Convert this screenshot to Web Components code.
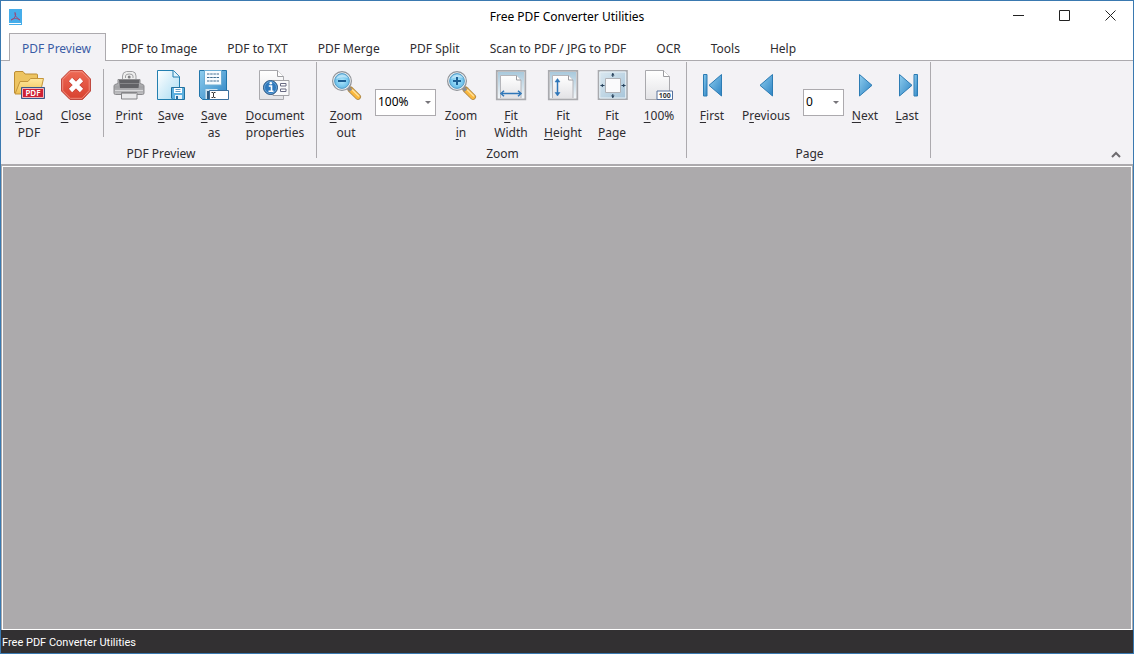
<!DOCTYPE html>
<html lang="en">
<head>
<meta charset="utf-8">
<title>Free PDF Converter Utilities</title>
<style>
html, body { height: 100%; margin: 0; }
body { font: 12px/17px "Noto Sans", "Open Sans", sans-serif; color: #2e2c30; }
</style>
</head>
<body>
<app-window>
  <title-bar slot="title">Free PDF Converter Utilities</title-bar>
  <tab-strip slot="tabs">
    <ribbon-tab selected>PDF Preview</ribbon-tab>
    <ribbon-tab>PDF to Image</ribbon-tab>
    <ribbon-tab>PDF to TXT</ribbon-tab>
    <ribbon-tab>PDF Merge</ribbon-tab>
    <ribbon-tab>PDF Split</ribbon-tab>
    <ribbon-tab>Scan to PDF / JPG to PDF</ribbon-tab>
    <ribbon-tab>OCR</ribbon-tab>
    <ribbon-tab>Tools</ribbon-tab>
    <ribbon-tab>Help</ribbon-tab>
  </tab-strip>
  <ribbon-bar slot="ribbon">
    <ribbon-group label="PDF Preview">
      <ribbon-button icon="load"><u>L</u>oad<br>PDF</ribbon-button>
      <ribbon-button icon="close" width="52"><u>C</u>lose</ribbon-button>
      <ribbon-divider></ribbon-divider>
      <ribbon-button icon="print"><u>P</u>rint</ribbon-button>
      <ribbon-button icon="save"><u>S</u>ave</ribbon-button>
      <ribbon-button icon="saveas" width="44"><u>S</u>ave<br>as</ribbon-button>
      <ribbon-button icon="props" width="78"><u>D</u>ocument<br>properties</ribbon-button>
    </ribbon-group>
    <ribbon-group label="Zoom">
      <ribbon-button icon="zoomout" width="50"><u>Z</u>oom<br>out</ribbon-button>
      <ribbon-combo label="Zoom level" value="100%" wide></ribbon-combo>
      <ribbon-button icon="zoomin" width="50">Zoom<br><u>i</u>n</ribbon-button>
      <ribbon-button icon="fitwidth" width="50"><u>F</u>it<br>Width</ribbon-button>
      <ribbon-button icon="fitheight" width="54">Fit<br><u>H</u>eight</ribbon-button>
      <ribbon-button icon="fitpage" width="44">Fit<br><u>P</u>age</ribbon-button>
      <ribbon-button icon="actual" width="50"><u>1</u>00%</ribbon-button>
    </ribbon-group>
    <ribbon-group label="Page">
      <ribbon-button icon="first"><u>F</u>irst</ribbon-button>
      <ribbon-button icon="previous" width="66">P<u>r</u>evious</ribbon-button>
      <ribbon-combo label="Page number" value="0"></ribbon-combo>
      <ribbon-button icon="next"><u>N</u>ext</ribbon-button>
      <ribbon-button icon="last"><u>L</u>ast</ribbon-button>
    </ribbon-group>
  </ribbon-bar>
  <status-bar slot="status">Free PDF Converter Utilities</status-bar>
</app-window>

<script>
const define = (name, html, setup) => {
  const template = document.createElement('template');
  template.innerHTML = html;
  customElements.define(name, class extends HTMLElement {
    connectedCallback() {
      if (this.shadowRoot) return;
      this.attachShadow({ mode: 'open' }).append(template.content.cloneNode(true));
      if (setup) setup(this, this.shadowRoot);
    }
  });
};

const GRADIENTS = `<defs>
  <linearGradient id="page" x1="0" y1="0" x2="0" y2="1"><stop offset="0" stop-color="#fff"/><stop offset="1" stop-color="#e3e3e6"/></linearGradient>
  <linearGradient id="blue" x1="0" y1="0" x2="1" y2="1"><stop offset="0" stop-color="#8fcdee"/><stop offset="1" stop-color="#2d84c4"/></linearGradient>
  <linearGradient id="sheet" x1="0" y1="0" x2="1" y2="1"><stop offset="0" stop-color="#fff"/><stop offset="1" stop-color="#a9dcf3"/></linearGradient>
  <linearGradient id="sky" x1="0" y1="0" x2="1" y2="1"><stop offset="0" stop-color="#dce9f1"/><stop offset="1" stop-color="#a5c4d9"/></linearGradient>
  <linearGradient id="skytop" x1="0" y1="0" x2="0" y2="1"><stop offset="0" stop-color="#a9c9dc"/><stop offset="1" stop-color="#f2f6f9"/></linearGradient>
  <linearGradient id="gold" x1="0" y1="0" x2="0" y2="1"><stop offset="0" stop-color="#ffe9a0"/><stop offset="1" stop-color="#efc052"/></linearGradient>
  <linearGradient id="red" x1="0" y1="0" x2="0" y2="1"><stop offset="0" stop-color="#ee6a56"/><stop offset="1" stop-color="#d8412f"/></linearGradient>
  <linearGradient id="metal" x1="0" y1="0" x2="0" y2="1"><stop offset="0" stop-color="#c9c9cb"/><stop offset=".5" stop-color="#a2a2a5"/><stop offset="1" stop-color="#c0c0c2"/></linearGradient>
  <radialGradient id="lens"><stop offset="0" stop-color="#b4e8fc"/><stop offset="1" stop-color="#63bce9"/></radialGradient>
</defs>`;

const lens = sign => `
  <path d="M20.500 20.500 28 27.800" stroke="#b08a4a" stroke-width="6" stroke-linecap="round"/>
  <path d="M21.500 21.500 28 27.800" stroke="#fbb83c" stroke-width="4.400" stroke-linecap="round"/>
  <path d="M22.500 21 28.500 27" stroke="#ffe09a" stroke-width="1.400" stroke-linecap="round"/>
  <path d="m18 18.500 3 3" stroke="#8b8d92" stroke-width="3.400"/>
  <circle cx="12" cy="12" r="9.400" fill="#eef3f6" stroke="#909398" stroke-width="1.200"/>
  <circle cx="12" cy="12" r="7.400" fill="url(#lens)" stroke="#5a9dc6"/>
  <path d="M6 10a6.500 6.500 0 0 1 12-1Q12 7 6 10Z" fill="#fff" opacity=".45"/>
  <path d="${sign}" stroke="#1c5f94" stroke-width="2"/>`;

const frame = `
  <path d="M1.800 1.800h28.500v28.500H1.800Z" fill="#fff" stroke="#a9aaae" stroke-width="1.800"/>
  <path d="M3 3h26v26H3Z" fill="url(#skytop)"/>
  <path d="M5.500 29V6.500h16l4.500 4.500v18" fill="url(#page)" stroke="#b4b5ba"/>
  <path d="M21.500 6.500V11H26" fill="#fff" stroke="#9a9ba0"/>`;

const ICONS = {
  load: `<path d="M1.500 24V4q0-1.500 1.500-1.500h7l2 2.500h11.500q1 0 1 1V24Z" fill="#edc461" stroke="#bd8e34"/>
    <path d="m2 25 5-12.500h8l2.500-3h13L27 25Z" fill="url(#gold)" stroke="#c4953a"/>
    <path d="M8.500 18.500h23v11h-23Z" fill="#cf2034" stroke="#385a8b"/>
    <path d="M9.500 19.500h21v9h-21Z" fill="none" stroke="#f3dfe3" stroke-width=".8"/>
    <text x="20" y="27" font-size="8" font-weight="600" fill="#fff" text-anchor="middle">PDF</text>`,
  close: `<path d="M10 1.500h12.500l8 8.500v12l-8 8.500H10L1.500 22V10Z" fill="url(#red)" stroke="#c04a40"/>
    <path d="M10.500 2.700h11.500l7.200 7.800v11l-7.200 7.800H10.500L2.700 21.500v-11Z" fill="none" stroke="#f39a8c" stroke-width=".8"/>
    <path d="m10.500 10.500 11 11m0-11-11 11" stroke="#c03c30" stroke-width="6"/>
    <path d="m10.500 10.500 11 11m0-11-11 11" stroke="#fff" stroke-width="4.600"/>`,
  print: `<path d="M9.500 12V7q0-4 4-4.500h6q3.500.5 3.500 4.500v5Z" fill="#eee" stroke="#a0a0a3"/>
    <path d="M12.500 9V7q0-2 3.800-2T20 7v2" fill="none" stroke="#a0a0a3"/><circle cx="16.200" cy="8" r="1.500" fill="#818184"/>
    <path d="M5 10.500h22v4l3 1q1 .5 1 1.500v7q0 1.500-1.500 1.500H2.500Q1 25.500 1 24v-7q0-1 1-1.500l3-1Z" fill="url(#metal)" stroke="#8b8b8e"/>
    <path d="M6 11h20.500l-1 8h-18.500Z" fill="#626266"/><path d="M6.500 14.500h19.500" stroke="#87878a"/>
    <path d="M2 21.500h28" stroke="#d9d9db"/>
    <path d="M8.500 23.500h15.500v6.500H8.500Z" fill="#e9e9eb" stroke="#858588"/><path d="M9 24.500h14.500" stroke="#aaaaac"/>`,
  save: `<path d="M2.500 1.500h16l6 6v23h-22Z" fill="url(#sheet)" stroke="#237fb0"/>
    <path d="M18 1.500V8h6.500" fill="#e1f4fc" stroke="#237fb0"/>
    <path d="M16.500 18.500h13v12H18l-1.500-1.500Z" fill="#5db0df" stroke="#22719f"/>
    <path d="M19 19h8v5h-8Z" fill="#fff"/><path d="M20.500 20.500h5m-5 2h5" stroke="#3d86b7" stroke-width=".8"/>
    <path d="M20 26h7v4h-7Z" fill="#e8f2f8"/><path d="M21 27h2v3h-2Z" fill="#286c9c"/>`,
  saveas: `<path d="M1.500 1.500h27v29H4.500l-3-3Z" fill="url(#blue)" stroke="#2176ab"/>
    <path d="M6.500 1.500h17V16h-17Z" fill="#f7fbfe" stroke="#6daed4"/>
    <path d="M9 5h12M9 8.500h12M9 12h12" stroke="#3e6b90" stroke-dasharray="2.500 .7"/>
    <path d="M7.500 20h12v10h-12Z" fill="#d2e4ee"/><path d="M9 22h4v8H9Z" fill="#315c80"/>
    <path d="M11.500 21.500h19v9h-19Z" fill="#fff" stroke="#396e9c"/>
    <path d="M13.500 23.500h1.500l.5.5.5-.5h1.500m-4 5h1.500l.5-.5.5.5h1.500m-2-4.500v4" stroke="#222" fill="none" stroke-width=".9"/>`,
  props: `<path d="M.5 1.500h18l6 6v23H.5Z" fill="url(#page)" stroke="#aaaaae"/>
    <path d="M18.500 1.500v6h6" fill="#fff" stroke="#9d9da1"/>
    <path d="M14 11.500h16v15H14Z" fill="#f9f9fa" stroke="#a2a2a6"/>
    <path d="M21.500 14.500h5.500V17h-5.500Zm0 5.500h5.500v2.500h-5.500Z" fill="#fff" stroke="#686a81"/>
    <circle cx="11.500" cy="18.500" r="7" fill="#2f79bd" stroke="#28537f"/><circle cx="11.500" cy="18.500" r="6" fill="none" stroke="#80b6df" stroke-width=".7"/>
    <path d="M9.800 17h2.700v5m-3 .3h5" stroke="#fff" stroke-width="1.600" fill="none"/><circle cx="11.800" cy="14.200" r="1.300" fill="#fff"/>`,
  zoomout: lens('M8 12h8'),
  zoomin: lens('M8 12h8m-4-4v8'),
  fitwidth: `${frame}<path d="M7 24.500h18" stroke="#2e76b8" stroke-width="1.500"/><path d="m9 21.800-3 2.700 3 2.700m14-5.400 3 2.700-3 2.700" fill="none" stroke="#2e76b8" stroke-width="1.500"/>`,
  fitheight: `${frame}<path d="M10.500 11v14" stroke="#2e76b8" stroke-width="1.500"/><path d="m8 13 2.500-3.500L13 13Zm0 10.500 2.500 3.500 2.500-3.500Z" fill="#2e76b8" stroke="#2e76b8" stroke-width=".5"/>`,
  fitpage: `<path d="M2.500 1.800H31v28.400H2.500Z" fill="url(#sky)" stroke="#a9aaae" stroke-width="1.600"/><path d="M3.800 3h25.900v26H3.800Z" fill="none" stroke="#e9f1f6"/>
    <path d="M9.500 9.500h15v14h-15Z" fill="#fafafc" stroke="#b0b2b7"/>
    <path d="M16.800 4v4m0 17v4M4.500 16.500h4m17 0h4" stroke="#29435d"/>
    <path d="m15 6.500 1.800-2.500 1.800 2.500Zm0 20 1.800 2.500 1.800-2.500ZM7 14.700l-2.500 1.800L7 18.300Zm20 0 2.500 1.800-2.500 1.800Z" fill="#29435d"/>`,
  actual: `<path d="M2.500 1.500h18l6 6v23h-24Z" fill="url(#page)" stroke="#a9a9ad"/><path d="M20.500 1.500v6h6" fill="#fff" stroke="#9a9a9e"/>
    <path d="M14 22h15.500v8.500H14Z" fill="#fff" stroke="#56709b"/>
    <text x="21.800" y="28.800" font-size="7" font-weight="700" fill="#35353a" text-anchor="middle">100</text>`,
  first: `<path d="M7.500 5.500h3.500v21.500H7.500Z" fill="url(#blue)" stroke="#2c7cb4"/><path d="M25.500 5.500v21.500L13 16.300Z" fill="url(#blue)" stroke="#2c7cb4"/>`,
  previous: `<path d="M22.500 5.500v21.500L10 16.300Z" fill="url(#blue)" stroke="#2c7cb4"/>`,
  next: `<path d="M10.500 5.500v21.500L23 16.300Z" fill="url(#blue)" stroke="#2c7cb4"/>`,
  last: `<path d="M8.500 5.500v21.500L21 16.300Z" fill="url(#blue)" stroke="#2c7cb4"/><path d="M23 5.500h3.500v21.500H23Z" fill="url(#blue)" stroke="#2c7cb4"/>`
};

define('app-window', `<style>
  :host { display: flex; flex-direction: column; box-sizing: border-box; min-height: 100vh; border: 1px solid #3a79b0; background: #fff; }
  .work { flex: 1; display: flex; background: #acaaac; }
  main { flex: 1; margin: 1px 1px 0; border: 1px solid #fff; }
</style>
<slot name="title"></slot><slot name="tabs"></slot><slot name="ribbon"></slot>
<div class="work"><main aria-label="Document"></main></div>
<slot name="status"></slot>`);

define('title-bar', `<style>
  :host { display: grid; grid-template-columns: 1fr auto 1fr; align-items: start; height: 32px; color: #000; }
  .logo { width: 13px; height: 16px; margin: 8px 0 0 8px; }
  h1 { margin: 7px 0 0; font: inherit; }
  .controls { display: flex; justify-content: end; }
  button { width: 46px; height: 29px; padding: 0; border: 0; background: none; }
  button svg { display: block; margin: auto; }
</style>
<svg class="logo" viewBox="0 0 13 16"><path d="M0 0h13v16H0Z" fill="#45adea"/><path d="M0 14h12v1H0Z" fill="#fff"/><path d="M6 3.500c2 3-1 6.500-4 7.500 3-2 6-2 9 0C8 9 5.500 7 6 3.500Z" fill="none" stroke="#9d4a78"/></svg>
<h1><slot></slot></h1>
<div class="controls">
  <button aria-label="Minimize"><svg width="11" height="11" fill="none" stroke="#222"><path d="M0 5.500h11"/></svg></button>
  <button aria-label="Maximize"><svg width="11" height="11" fill="none" stroke="#222"><path d="M.5.5h10v10H.5Z"/></svg></button>
  <button aria-label="Close"><svg width="11" height="11" fill="none" stroke="#222"><path d="m.5.5 10 10m0-10-10 10"/></svg></button>
</div>`);

define('tab-strip', `<style>
  :host { display: flex; gap: 2px; height: 28px; padding-left: 8px; background: linear-gradient(#acaaae, #acaaae) bottom / 100% 1px no-repeat; }
</style><slot></slot>`, h => h.setAttribute('role', 'tablist'));

define('ribbon-tab', `<style>
  :host { display: flex; }
  button { padding: 2px 14px 0 12px; border: 1px solid transparent; border-bottom: 0; background: none; font: inherit; color: inherit; white-space: nowrap; }
  :host([selected]) button { border-color: #acaaae; background: #f3f2f5; color: #3a5ca5; }
</style><button role="tab"><slot></slot></button>`, (h, r) =>
  r.querySelector('button').setAttribute('aria-selected', h.hasAttribute('selected')));

define('ribbon-bar', `<style>
  :host { display: flex; height: 103px; padding-left: 3px; background: #f3f2f5; border-bottom: 1px solid #acaaae; }
  .collapse { width: 24px; height: 20px; margin: auto 5px 0 auto; padding: 0; border: 0; background: none; }
  svg { display: block; margin: auto; }
</style><slot></slot>
<button class="collapse" aria-label="Collapse ribbon"><svg width="10" height="7"><path d="m1 6 4-4 4 4" fill="none" stroke="#6d6b6f" stroke-width="2"/></svg></button>`);

define('ribbon-group', `<style>
  :host { display: flex; flex-direction: column; padding: 0 3px 0 4px; background: linear-gradient(#acaaae, #acaaae) right 0 top 1px / 1px 96px no-repeat; }
  .items { display: flex; height: 84px; }
  footer { text-align: center; }
</style><div class="items"><slot></slot></div><footer></footer>`, (h, r) => {
  r.querySelector('footer').textContent = h.getAttribute('label');
});

define('ribbon-divider', `<style>
  :host { width: 1px; height: 68px; margin: 8px 4px 0 1px; background: #acaaae; }
</style>`);

define('ribbon-button', `<style>
  button { display: flex; flex-direction: column; align-items: center; gap: 6px; width: var(--width, 42px); padding: 8px 0 0; border: 0; background: none; font: inherit; color: inherit; white-space: nowrap; }
  svg { display: block; width: 32px; height: 32px; fill: none; }
  ::slotted(u) { text-underline-offset: 2px; }
</style><button><svg viewBox="0 0 32 32" aria-hidden="true"></svg><span><slot></slot></span></button>`, (h, r) => {
  if (h.hasAttribute('width')) h.style.setProperty('--width', h.getAttribute('width') + 'px');
  r.querySelector('svg').innerHTML = GRADIENTS + ICONS[h.getAttribute('icon')];
});

define('ribbon-combo', `<style>
  :host { margin: 28px 0 0 4px; }
  label { display: grid; }
  select, svg { grid-area: 1 / 1; }
  select { appearance: none; width: 41px; height: 27px; padding: 0 2px 2px; border: 1px solid #acaaae; border-radius: 0; background: #fff; font: inherit; color: #000; }
  :host([wide]) select { width: 61px; }
  svg { place-self: center end; margin-right: 5px; pointer-events: none; }
</style><label><select><option></option></select><svg width="6" height="3"><path d="M0 0h6L3 3Z" fill="#77757a"/></svg></label>`, (h, r) => {
  r.querySelector('select').setAttribute('aria-label', h.getAttribute('label'));
  r.querySelector('option').textContent = h.getAttribute('value');
});

define('status-bar', `<style>
  :host { display: block; padding: 4px 1px 2px; background: #323032; color: #fff; font: 11px/17px Roboto, sans-serif; }
</style><slot></slot>`);
</script>
</body>
</html>
